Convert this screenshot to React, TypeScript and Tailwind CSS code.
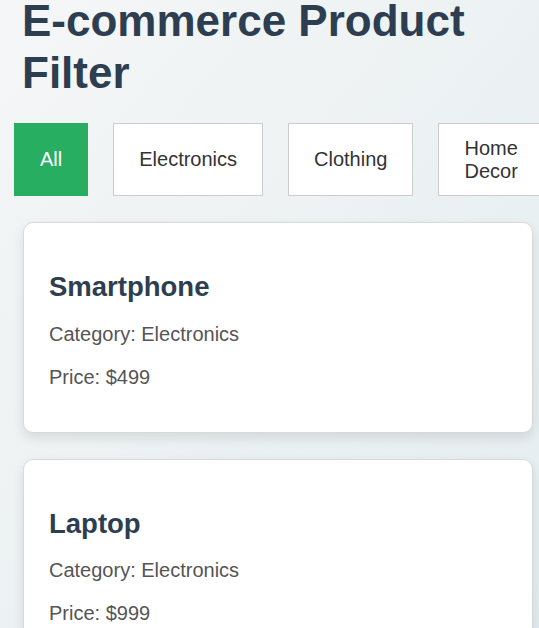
import React from "react";

const categories = ["All", "Electronics", "Clothing", "Home Decor"];

const products = [
  { name: "Smartphone", category: "Electronics", price: 499 },
  { name: "Laptop", category: "Electronics", price: 999 },
  { name: "T-Shirt", category: "Clothing", price: 25 },
];

export default function App() {
  return (
    <div
      className="h-screen w-full overflow-hidden bg-gradient-to-br from-[#f5f6f7] to-[#e3edef] text-[#333]"
      style={{ fontFamily: '"Liberation Sans", Arial, sans-serif' }}
    >
      <h1 className="mt-[-5px] pl-[22px] text-[44px] font-bold leading-[52px] text-[#2c3e50]">
        E-commerce Product Filter
      </h1>
      <div className="mt-[24px] flex gap-[25px] pl-[14px] pr-[14px]">
        {categories.map((c, i) => (
          <button
            key={c}
            className={
              i === 0
                ? "border border-[#27ae60] bg-[#27ae60] px-[25px] py-[12.5px] text-[20px] leading-[23px] text-white"
                : "border border-[#cccccc] bg-white px-[25px] py-[12.5px] text-[20px] leading-[23px] text-[#333]"
            }
          >
            {c}
          </button>
        ))}
      </div>
      <div className="mt-[26px] flex flex-col gap-[26px] pl-[23px]">
        {products.map((p) => (
          <div
            key={p.name}
            className="w-[510px] rounded-[10px] border border-[#d9d9d9] bg-white px-[25px] pt-[25px] pb-[24px] shadow-[0_5px_12px_rgba(0,0,0,0.1)]"
          >
            <h2 className="mt-[23px] text-[27.5px] font-bold leading-[31.6px] text-[#2c3e50]">
              {p.name}
            </h2>
            <p className="mt-[20px] text-[20px] leading-[23px] text-[#555]">
              Category: {p.category}
            </p>
            <p className="mt-[20px] mb-[19px] text-[20px] leading-[23px] text-[#555]">
              Price: ${p.price}
            </p>
          </div>
        ))}
      </div>
    </div>
  );
}
